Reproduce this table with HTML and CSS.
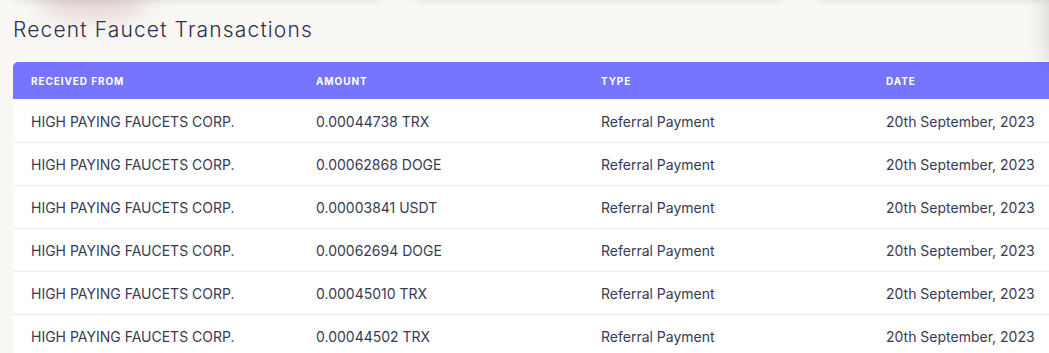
FILE: index.html
```html
<!DOCTYPE html>
<html lang="en">
<head>
<meta charset="utf-8">
<title>Recent Faucet Transactions</title>
<link rel="stylesheet" href="styles.css">
</head>
<body>
<div class="page">
  <div class="cards">
    <div class="card card-first"></div>
    <div class="card"></div>
    <div class="card"></div>
  </div>
  <div class="side-shadow"></div>
  <h2 class="title">Recent Faucet Transactions</h2>
  <table class="tx">
    <thead>
      <tr><th>Received From</th><th>Amount</th><th>Type</th><th>Date</th></tr>
    </thead>
    <tbody>
      <tr><td>HIGH PAYING FAUCETS CORP.</td><td>0.00044738 TRX</td><td>Referral Payment</td><td>20th September, 2023</td></tr>
      <tr><td>HIGH PAYING FAUCETS CORP.</td><td>0.00062868 DOGE</td><td>Referral Payment</td><td>20th September, 2023</td></tr>
      <tr><td>HIGH PAYING FAUCETS CORP.</td><td>0.00003841 USDT</td><td>Referral Payment</td><td>20th September, 2023</td></tr>
      <tr><td>HIGH PAYING FAUCETS CORP.</td><td>0.00062694 DOGE</td><td>Referral Payment</td><td>20th September, 2023</td></tr>
      <tr><td>HIGH PAYING FAUCETS CORP.</td><td>0.00045010 TRX</td><td>Referral Payment</td><td>20th September, 2023</td></tr>
      <tr><td>HIGH PAYING FAUCETS CORP.</td><td>0.00044502 TRX</td><td>Referral Payment</td><td>20th September, 2023</td></tr>
    </tbody>
  </table>
</div>
</body>
</html>
```

FILE: styles.css
```css
html, body {
  margin: 0;
  padding: 0;
  background: #f9f8f5;
  overflow: hidden;
}
body {
  font-family: Inter, "Noto Sans", sans-serif;
  color: #343650;
}
.page {
  position: relative;
  width: 1049px;
  height: 353px;
  overflow: hidden;
}
.cards {
  display: flex;
  gap: 34px;
  margin-top: -40px;
  padding-left: 13px;
  height: 38px;
}
.card {
  position: relative;
  flex: 0 0 368px;
  height: 38px;
  background: #f9f8f5;
  border-radius: 6px;
  box-shadow: 0 2px 9px rgba(0, 0, 0, 0.13);
}
.card-first::after {
  content: "";
  position: absolute;
  left: 25px;
  bottom: -20px;
  width: 110px;
  height: 40px;
  border-radius: 50%;
  background: rgba(150, 80, 90, 0.22);
  filter: blur(12px);
}
.side-shadow {
  position: absolute;
  top: -20px;
  right: -40px;
  width: 40px;
  height: 82px;
  background: #f9f8f5;
  box-shadow: 0 0 26px rgba(0, 0, 0, 0.18);
}
.title {
  margin: 0;
  padding: 18px 0 0 13px;
  height: 52px;
  box-sizing: border-box;
  font-size: 21px;
  font-weight: 350;
  letter-spacing: 1.15px;
  color: #2c2e4c;
  line-height: 1.3;
}
.tx {
  margin: 12px 0 0 13px;
  border-collapse: collapse;
  table-layout: fixed;
  width: 1140px;
  background: #ffffff;
}
.tx th {
  background: #7675ff;
  color: #ffffff;
  text-align: left;
  text-transform: uppercase;
  font-size: 10px;
  font-weight: 700;
  letter-spacing: 0.9px;
  height: 37px;
  padding: 0 18px;
  width: 285px;
  box-sizing: border-box;
}
.tx th:first-child {
  border-top-left-radius: 5px;
}
.tx td {
  height: 43px;
  padding: 2px 18px 0;
  font-size: 14px;
  color: #383a55;
  border-bottom: 1px solid #ededf0;
  box-sizing: border-box;
  white-space: nowrap;
}
```
